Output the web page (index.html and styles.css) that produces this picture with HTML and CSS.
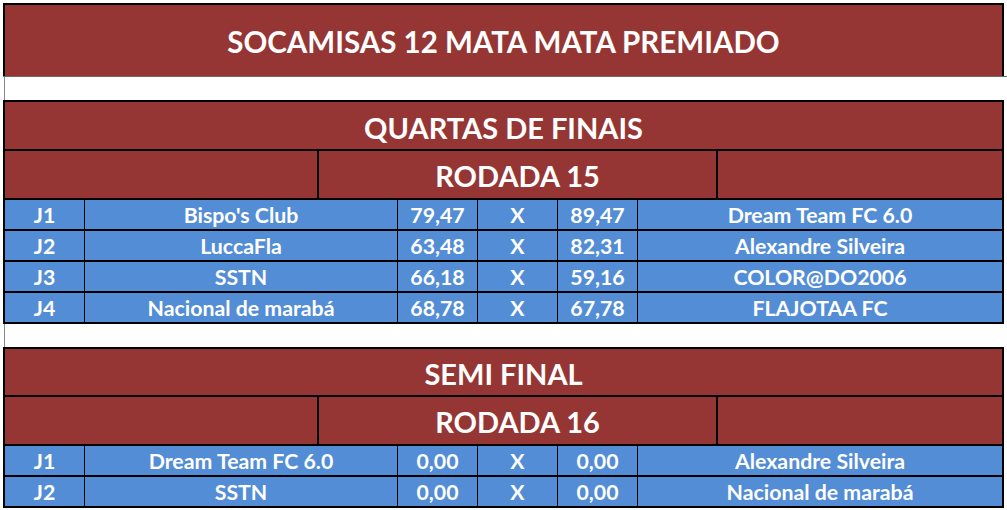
FILE: index.html
```html
<!DOCTYPE html>
<html lang="pt">
<head>
<meta charset="utf-8">
<title>SOCAMISAS 12 MATA MATA PREMIADO</title>
<link rel="stylesheet" href="styles.css">
</head>
<body>
<div class="sheet">
  <div class="title">SOCAMISAS 12 MATA MATA PREMIADO</div>
  <div class="gridline"></div>
  <div class="gap"></div>

  <div class="section">
    <div class="head">QUARTAS DE FINAIS</div>
    <div class="round"><div class="cell"></div><div class="cell">RODADA 15</div><div class="cell"></div></div>
    <div class="match"><div>J1</div><div>Bispo's Club</div><div>79,47</div><div>X</div><div>89,47</div><div>Dream Team FC 6.0</div></div>
    <div class="match"><div>J2</div><div>LuccaFla</div><div>63,48</div><div>X</div><div>82,31</div><div>Alexandre Silveira</div></div>
    <div class="match"><div>J3</div><div>SSTN</div><div>66,18</div><div>X</div><div>59,16</div><div>COLOR@DO2006</div></div>
    <div class="match"><div>J4</div><div>Nacional de marabá</div><div>68,78</div><div>X</div><div>67,78</div><div>FLAJOTAA FC</div></div>
  </div>

  <div class="gap"></div>

  <div class="section section-semi">
    <div class="head">SEMI FINAL</div>
    <div class="round"><div class="cell"></div><div class="cell">RODADA 16</div><div class="cell"></div></div>
    <div class="match"><div>J1</div><div>Dream Team FC 6.0</div><div>0,00</div><div>X</div><div>0,00</div><div>Alexandre Silveira</div></div>
    <div class="match"><div>J2</div><div>SSTN</div><div>0,00</div><div>X</div><div>0,00</div><div>Nacional de marabá</div></div>
  </div>
</div>
</body>
</html>
```

FILE: styles.css
```css
html, body {
  margin: 0;
  padding: 0;
  background: #ffffff;
}

body {
  font-family: "Lato", "Noto Sans", sans-serif;
  font-weight: 700;
  color: #ffffff;
}

.sheet {
  width: 1007px;
  height: 510px;
  padding: 3px 0 0 3px;
  box-sizing: border-box;
  overflow: hidden;
}

.title {
  width: 1001px;
  box-sizing: border-box;
  height: 73px;
  background: #963634;
  border: 2px solid #000;
  border-bottom: 0;
  display: flex;
  align-items: center;
  justify-content: center;
  font-size: 29.5px;
  padding-top: 1px;
}

.gridline {
  height: 1px;
  background: #6a6a6a;
  width: 1004px;
}

.gap {
  height: 23px;
  margin-left: 1px;
  border-left: 1px solid #8a8a8a;
}

.section {
  width: 1001px;
  box-sizing: border-box;
  border: 2px solid #000;
  border-bottom: 0;
}

.head {
  height: 49px;
  box-sizing: border-box;
  background: #963634;
  border-bottom: 2px solid #000;
  display: flex;
  align-items: center;
  justify-content: center;
  font-size: 29px;
  padding-top: 3px;
}

.section-semi .head {
  height: 48px;
}

.round {
  display: grid;
  grid-template-columns: 312px 397px 284px;
  column-gap: 2px;
  background: #000;
  border-bottom: 2px solid #000;
}

.round .cell {
  height: 47px;
  background: #963634;
  display: flex;
  align-items: center;
  justify-content: center;
  font-size: 29px;
  padding-top: 2px;
  box-sizing: border-box;
}

.match {
  display: grid;
  grid-template-columns: 79px 312px 79px 79px 79px 364px;
  column-gap: 1px;
  background: #000;
  border-bottom: 2px solid #000;
}

.match > div {
  height: 29px;
  background: #538dd5;
  display: flex;
  align-items: center;
  justify-content: center;
  font-size: 21.3px;
  padding-top: 1px;
  box-sizing: border-box;
}
```
